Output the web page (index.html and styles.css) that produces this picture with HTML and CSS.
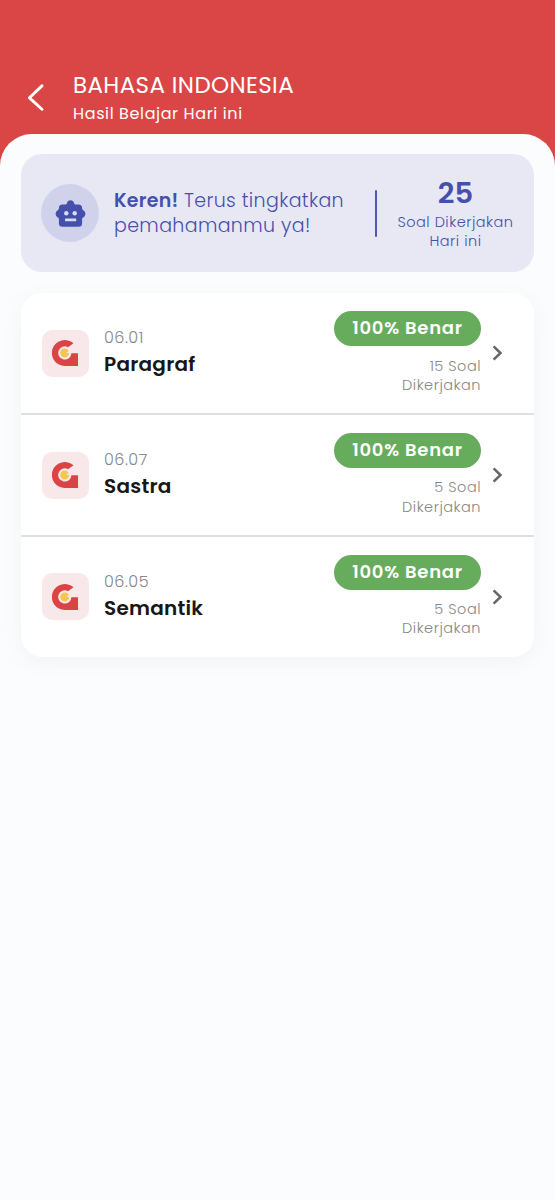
FILE: index.html
```html
<!DOCTYPE html>
<html lang="id">
<head>
<meta charset="utf-8">
<title>Bahasa Indonesia</title>
<link rel="stylesheet" href="styles.css">
</head>
<body>
<svg width="0" height="0" class="defs" aria-hidden="true">
  <symbol id="logo" viewBox="0 0 26 26">
    <path class="logo-letter" d="M21.5 3.3A13 13 0 1 0 13 26H26V13.2H19.4A6.6 6.6 0 1 1 16 7.2Z"/>
    <path class="logo-dot" d="M15.8 9.7A4.5 4.5 0 1 0 17.2 13.1H14.3L16.7 11Z"/>
  </symbol>
  <symbol id="next" viewBox="0 0 11 16">
    <path class="next-stroke" d="M1.6 1.3L8.5 8L1.6 14.7"/>
  </symbol>
</svg>
<header class="header">
  <svg class="back" viewBox="0 0 16 26"><path d="M14.2 1.8L2.2 13.3L14.2 24.3"/></svg>
  <div>
    <h1 class="title">BAHASA INDONESIA</h1>
    <p class="subtitle">Hasil Belajar Hari ini</p>
  </div>
</header>
<main class="sheet">
  <section class="banner">
    <div class="avatar">
      <svg class="robot" viewBox="0 0 31 27">
        <path class="robot-head" d="M15.5 .3C17.3 .3 18.5 1.4 19 3C19.3 4 20 4.6 21 4.6H23.5C25.8 4.6 27.1 6 27.1 8.1C27.1 9.2 27.4 9.8 28.3 10.2A4.1 4.1 0 0 1 28.3 17.4C27.4 17.8 27.1 18.3 27.1 19.3V23.2Q27.1 26.7 23.6 26.7H7.4Q3.9 26.7 3.9 23.2V19.3C3.9 18.3 3.6 17.8 2.7 17.4A4.1 4.1 0 0 1 2.7 10.2C3.6 9.8 3.9 9.2 3.9 8.1C3.9 6 5.2 4.6 7.5 4.6H10C11 4.6 11.7 4 12 3C12.5 1.4 13.7 .3 15.5 .3Z"/>
        <circle class="robot-face" cx="11.3" cy="13.2" r="2.2"/>
        <circle class="robot-face" cx="19.7" cy="13.2" r="2.2"/>
        <rect class="robot-face" x="10" y="18.6" width="11.2" height="2.6" rx=".4"/>
      </svg>
    </div>
    <p class="message"><span class="message-line"><b>Keren!</b> Terus tingkatkan</span><span class="message-line">pemahamanmu ya!</span></p>
    <div class="rule"></div>
    <div class="total">
      <strong class="total-number">25</strong>
      <span class="total-label">Soal Dikerjakan<br>Hari ini</span>
    </div>
  </section>
  <section class="list">
    <article class="row">
      <div class="tile"><svg class="logo"><use href="#logo"/></svg></div>
      <div class="topic"><p class="code">06.01</p><h2 class="name">Paragraf</h2></div>
      <div class="score"><span class="pill">100% Benar</span><p class="count">15 Soal<br>Dikerjakan</p></div>
      <svg class="next"><use href="#next"/></svg>
    </article>
    <article class="row">
      <div class="tile"><svg class="logo"><use href="#logo"/></svg></div>
      <div class="topic"><p class="code">06.07</p><h2 class="name">Sastra</h2></div>
      <div class="score"><span class="pill">100% Benar</span><p class="count">5 Soal<br>Dikerjakan</p></div>
      <svg class="next"><use href="#next"/></svg>
    </article>
    <article class="row">
      <div class="tile"><svg class="logo"><use href="#logo"/></svg></div>
      <div class="topic"><p class="code">06.05</p><h2 class="name">Semantik</h2></div>
      <div class="score"><span class="pill">100% Benar</span><p class="count">5 Soal<br>Dikerjakan</p></div>
      <svg class="next"><use href="#next"/></svg>
    </article>
  </section>
</main>
</body>
</html>
```
FILE: styles.css
```css
* { box-sizing: border-box; margin: 0; padding: 0; }
body {
  min-height: 1200px;
  background: #da4646;
  font-family: Poppins, Inter, "Open Sans", sans-serif;
  display: flex;
  flex-direction: column;
}
.defs { display: none; }
.header {
  height: 134px;
  padding: 70px 0 0 27px;
  display: flex;
  gap: 29px;
  color: #fff;
}
.back { width: 17px; height: 27px; margin-top: 14px; }
.back path { fill: none; stroke: #fff; stroke-width: 2.8; stroke-linecap: round; stroke-linejoin: round; }
.title { font-size: 23px; line-height: 30px; font-weight: 400; letter-spacing: .38px; white-space: nowrap; }
.subtitle { margin-top: 1px; font-size: 16px; line-height: 26px; font-weight: 400; letter-spacing: .62px; }
.sheet {
  flex: 1;
  padding: 20px 21px;
  border-radius: 32px 32px 0 0;
  background: #fbfcfe;
}
.banner {
  height: 118px;
  border-radius: 21px;
  background: #e8e8f5;
  color: #4450ac;
  display: flex;
  align-items: center;
  padding: 0 20px 0 20px;
}
.avatar {
  width: 58px;
  height: 58px;
  border-radius: 50%;
  background: #d0d2ec;
  display: flex;
  align-items: center;
  justify-content: center;
}
.robot { width: 31px; height: 27px; }
.robot-head { fill: #4450ac; }
.robot-face { fill: #d9dbf1; }
.message { width: 246px; margin-left: 15px; font-size: 19px; line-height: 25px; font-weight: 300; letter-spacing: .36px; white-space: nowrap; }
.message b { font-weight: 600; letter-spacing: .25px; }
.message-line { display: block; }
.rule { width: 2px; height: 47px; margin-left: 15px; background: #4d59b2; border-radius: 1px; flex: none; }
.total { flex: 1; margin-left: 20px; display: flex; flex-direction: column; align-items: center; text-align: center; white-space: nowrap; }
.total-number { margin: -1px 0 1px; font-size: 29px; line-height: 38px; font-weight: 600; }
.total-label { font-size: 14.5px; line-height: 19.4px; font-weight: 300; letter-spacing: .5px; }
.list {
  margin-top: 20.5px;
  padding-top: 1px;
  border-radius: 21px;
  background: #fff;
  box-shadow: 0 5px 20px rgba(80, 95, 110, .06);
}
.row { height: 121.7px; display: flex; align-items: center; padding: 0 31px 0 20.5px; border-bottom: 2px solid #e0e0e0; }
.row:last-child { height: 119.7px; border-bottom: 0; }
.tile { width: 47px; height: 47px; border-radius: 10px; background: #f9e8ea; display: flex; align-items: center; justify-content: center; }
.logo { width: 26px; height: 26px; }
.logo-letter { fill: #da4444; }
.logo-dot { fill: #f3c74f; }
.topic { flex: 1; margin-left: 15.5px; white-space: nowrap; }
.code { font-size: 16px; line-height: 24px; font-weight: 300; letter-spacing: .5px; color: #888; }
.name { margin: -1px 0 1px; font-size: 20px; line-height: 30px; font-weight: 600; letter-spacing: .25px; color: #171717; }
.score { display: flex; flex-direction: column; align-items: flex-end; }
.pill { width: 147px; height: 35px; border-radius: 18px; background: #67ac5c; color: #fff; font-size: 18px; line-height: 33.6px; font-weight: 600; letter-spacing: .75px; text-align: center; white-space: nowrap; }
.count { margin-top: 10.3px; font-size: 14.5px; line-height: 19.4px; font-weight: 300; letter-spacing: .5px; color: #888; text-align: right; }
.next { width: 11px; height: 16px; margin-left: 11px; }
.next-stroke { fill: none; stroke: #666; stroke-width: 2.5; }
```
